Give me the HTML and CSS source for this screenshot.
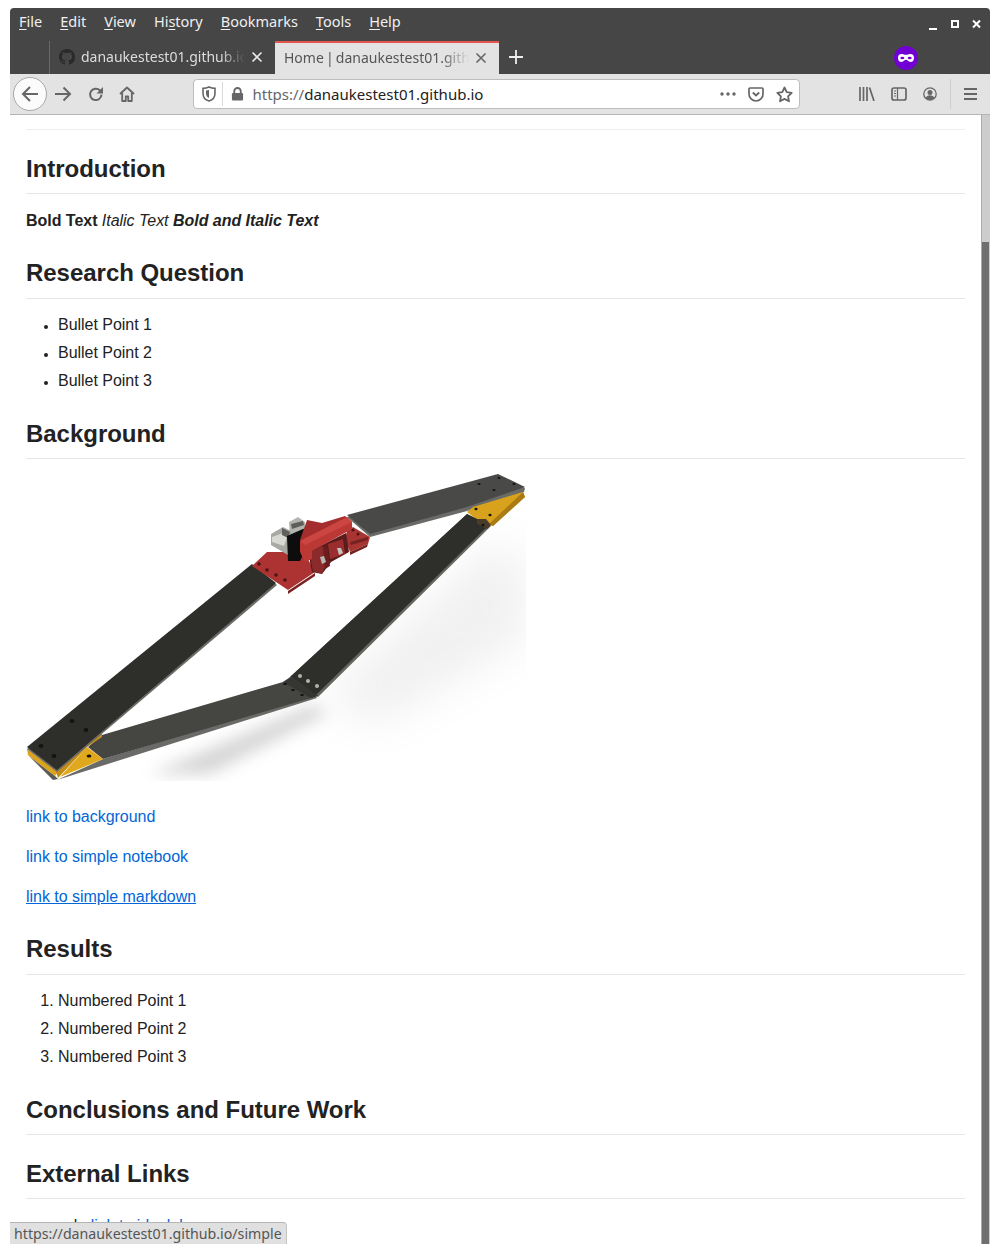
FILE: index.html
```html
<!DOCTYPE html>
<html lang="en">
<head>
<meta charset="utf-8">
<title>Home | danaukestest01.github.io</title>
<link rel="stylesheet" href="styles.css">
</head>
<body>
<div class="window">
  <header class="titlebar">
    <nav class="menubar">
      <span class="menu"><u>F</u>ile</span>
      <span class="menu"><u>E</u>dit</span>
      <span class="menu"><u>V</u>iew</span>
      <span class="menu">Hi<u>s</u>tory</span>
      <span class="menu"><u>B</u>ookmarks</span>
      <span class="menu"><u>T</u>ools</span>
      <span class="menu"><u>H</u>elp</span>
      <span class="winctl">
        <svg width="64" height="12" viewBox="0 0 64 12"><path d="M1 10h8" stroke="#fff" stroke-width="2"/><rect x="24" y="2" width="6" height="6" fill="none" stroke="#fff" stroke-width="2"/><path d="M45 1.500l7 7M52 1.500l-7 7" stroke="#fff" stroke-width="2"/></svg>
      </span>
    </nav>
    <div class="tabstrip">
      <div class="tab">
        <svg class="favicon" width="16" height="16" viewBox="0 0 16 16"><path fill="#2a2a2a" d="M8 0C3.58 0 0 3.58 0 8c0 3.54 2.29 6.53 5.47 7.59.4.07.55-.17.55-.38 0-.19-.01-.82-.01-1.49-2.01.37-2.53-.49-2.69-.94-.09-.23-.48-.94-.82-1.13-.28-.15-.68-.52-.01-.53.63-.01 1.08.58 1.23.82.72 1.21 1.87.87 2.33.66.07-.52.28-.87.51-1.07-1.78-.2-3.64-.89-3.64-3.95 0-.87.31-1.59.82-2.15-.08-.2-.36-1.02.08-2.12 0 0 .67-.21 2.2.82.64-.18 1.32-.27 2-.27s1.36.09 2 .27c1.53-1.04 2.2-.82 2.2-.82.44 1.1.16 1.92.08 2.12.51.56.82 1.27.82 2.15 0 3.07-1.87 3.75-3.65 3.95.29.25.54.73.54 1.48 0 1.07-.01 1.93-.01 2.2 0 .21.15.46.55.38A8.01 8.01 0 0 0 16 8c0-4.42-3.58-8-8-8z"/></svg>
        <span class="tabtitle">danaukestest01.github.io</span>
        <svg class="tabclose" width="12" height="12" viewBox="0 0 12 12"><path d="M1.500 1.500l9 9M10.500 1.500l-9 9" stroke="#e8e8e8" stroke-width="1.600"/></svg>
      </div>
      <div class="tab selected">
        <span class="tabtitle">Home | danaukestest01.github.io</span>
        <svg class="tabclose" width="12" height="12" viewBox="0 0 12 12"><path d="M1.500 1.500l9 9M10.500 1.500l-9 9" stroke="#666" stroke-width="1.600"/></svg>
      </div>
      <svg class="newtab" width="16" height="16" viewBox="0 0 16 16"><path d="M8 1v14M1 8h14" stroke="#eee" stroke-width="1.800"/></svg>
      <span class="private">
        <svg width="24" height="24" viewBox="0 0 24 24"><circle cx="12" cy="12" r="12" fill="#7100d4"/><path fill="#fff" d="M7.500 8C5.200 8 4 9.600 4 12s1.400 4 3.500 4c2.200 0 3-2.200 4.500-2.200s2.300 2.200 4.500 2.200c2.100 0 3.500-1.600 3.500-4S18.800 8 16.500 8c-1.500 0-3 .8-4.500.8S9 8 7.500 8z"/><ellipse cx="8.300" cy="12" rx="2" ry="1.200" fill="#7100d4"/><ellipse cx="15.700" cy="12" rx="2" ry="1.200" fill="#7100d4"/></svg>
      </span>
    </div>
  </header>

  <div class="toolbar">
    <span class="backbtn">
      <svg width="18" height="18" viewBox="0 0 18 18"><path d="M17 9H2M9 2L2 9l7 7" fill="none" stroke="#666" stroke-width="2"/></svg>
    </span>
    <svg class="tool" width="18" height="18" viewBox="0 0 18 18"><path d="M1 9h15M9.500 2.500L16 9l-6.500 6.500" fill="none" stroke="#666" stroke-width="2"/></svg>
    <svg class="tool" width="16" height="16" viewBox="0 0 16 16"><path d="M13.500 8.500a5.700 5.700 0 1 1-1.700-4.200L14 6.500" fill="none" stroke="#666" stroke-width="2"/><path d="M15 1v6.500H8.500z" fill="#666"/></svg>
    <svg class="tool" width="16" height="16" viewBox="0 0 16 16"><path d="M1 8l7-6.500L15 8M3.200 7v8h3.600v-4.500h2.400V15h3.600V7" fill="none" stroke="#666" stroke-width="1.800" stroke-linejoin="round"/></svg>
    <div class="urlbar">
      <svg class="shield" width="14" height="16" viewBox="0 0 14 16"><path d="M7 1c2 1 4 1.400 6 1.400v4.800C13 11 10.500 14 7 15 3.500 14 1 11 1 7.200V2.400C3 2.400 5 2 7 1z" fill="none" stroke="#666" stroke-width="1.600"/><path d="M7 4v8c-2-.8-3-2.600-3-4.800V4.500z" fill="#666"/></svg>
      <span class="urlsep"></span>
      <svg class="lock" width="13" height="16" viewBox="0 0 14 16"><path d="M3.500 7V5a3.500 3.500 0 0 1 7 0v2" fill="none" stroke="#666" stroke-width="2"/><rect x="1" y="7" width="12" height="8" rx="1.200" fill="#666"/></svg>
      <span class="url"><span class="urldim">https://</span>danaukestest01.github.io</span>
      <svg class="dots" width="16" height="4" viewBox="0 0 16 4"><circle cx="2" cy="2" r="1.700" fill="#666"/><circle cx="8" cy="2" r="1.700" fill="#666"/><circle cx="14" cy="2" r="1.700" fill="#666"/></svg>
      <svg class="pocket" width="16" height="15" viewBox="0 0 16 15"><path d="M2 1h12a1 1 0 0 1 1 1v5a7 7 0 0 1-14 0V2a1 1 0 0 1 1-1z" fill="none" stroke="#666" stroke-width="1.700"/><path d="M4.800 5.500L8 8.500l3.200-3" fill="none" stroke="#666" stroke-width="1.800"/></svg>
      <svg class="star" width="17" height="17" viewBox="0 0 17 17"><path d="M8.500 1.500l2.200 4.600 5 .7-3.600 3.500.9 5-4.500-2.400L4 15.300l.9-5L1.300 6.800l5-.7z" fill="none" stroke="#666" stroke-width="1.800" stroke-linejoin="round"/></svg>
    </div>
    <div class="toolright">
      <svg width="16" height="14" viewBox="0 0 16 14"><path d="M1 0v14M4.500 0v14M8 0v14M10.500.5L15 14" fill="none" stroke="#666" stroke-width="1.700"/></svg>
      <svg width="16" height="14" viewBox="0 0 16 14"><rect x="1" y="1" width="14" height="12" rx="2" fill="none" stroke="#666" stroke-width="1.700"/><path d="M6.500 1v12M3 4h2M3 6.500h2M3 9h2" stroke="#666" stroke-width="1.200"/></svg>
      <svg width="14" height="14" viewBox="0 0 14 14"><circle cx="7" cy="7" r="6.200" fill="none" stroke="#666" stroke-width="1.300"/><circle cx="7" cy="5.500" r="2.500" fill="#666"/><path d="M2.500 11c1-2 2.500-2.800 4.500-2.800s3.500.8 4.500 2.800A6 6 0 0 1 7 13a6 6 0 0 1-4.500-2z" fill="#666"/></svg>
      <span class="toolsep"></span>
      <svg width="13" height="12" viewBox="0 0 13 12"><path d="M0 1h13M0 6h13M0 11h13" stroke="#666" stroke-width="1.800"/></svg>
    </div>
  </div>

  <div class="viewport">
    <main class="page">
      <hr class="rule">
      <h2>Introduction</h2>
      <p><strong>Bold Text</strong> <em>Italic Text</em> <strong><em>Bold and Italic Text</em></strong></p>
      <h2>Research Question</h2>
      <ul>
        <li>Bullet Point 1</li>
        <li>Bullet Point 2</li>
        <li>Bullet Point 3</li>
      </ul>
      <h2>Background</h2>
      <svg class="figure" width="500" height="307" viewBox="26 475 500 307" role="img" aria-label="Rendered model of a four-bar mechanism">
        <defs>
          <filter id="soft" x="-30%" y="-30%" width="160%" height="160%"><feGaussianBlur stdDeviation="8"/></filter>
          <filter id="softer" x="-40%" y="-40%" width="180%" height="180%"><feGaussianBlur stdDeviation="20"/></filter>
          <filter id="edge" x="-2%" y="-2%" width="104%" height="104%"><feGaussianBlur stdDeviation="0.45"/></filter>
          <clipPath id="frame"><rect x="26" y="475" width="500" height="307"/></clipPath>
        </defs>
        <g clip-path="url(#frame)">
          <g fill="#8c8c8c">
            <path filter="url(#softer)" opacity=".12" d="M322 700L492 545l34 15v80L380 725z"/>
            <path filter="url(#soft)" opacity=".36" d="M150 775L312 706l16 8L210 775z"/>
          </g>
          <g filter="url(#edge)">
            <path fill="#6a6a67" d="M347 518L498 476l27 13-1 4-57 19-97 26z"/>
            <path fill="#4a4a47" d="M347 516L498 475l27 13-58 20-97 27z"/>
            <path fill="#d9a21b" d="M467 513l6-5 50-15 2 5-32 29-12-3z"/>
            <path fill="#a97a12" d="M523 493l2 5-32 29-4-2z"/>
            <path fill="#66665f" d="M290 678L467 515l24 12-173 171z"/>
            <path fill="#2d2d2c" d="M290 678L467 515l22 11-173 170z"/>
            <path fill="#4a3c2c" d="M477 520l9 0 5 6-4 4-10-5z"/>

            <path fill="#6b6b67" d="M57 781L103 760 315 696l2 3z"/>
            <path fill="#444442" d="M102 736L283 683l8-5 27 19-215 63-15-12z"/>
            <path fill="#2b2c2a" d="M290 678l-7 5 28 16 7-2z" opacity=".6"/>

            <path fill="#5a5a57" d="M28 756l25 25 5-1-3-3z"/>
            <path fill="#dca31a" d="M27 750l31 23-3 4-27-21z"/>
            <path fill="#c48d14" d="M56 773L102 733v5L87 748 58 779z"/>
            <path fill="#e0a81d" d="M87 748l16 12-43 18z"/>

            <path fill="#6b6b66" d="M27 750L252 567l25 19L57 773z"/>
            <path fill="#2d2d2c" d="M27 748L252 565l24 19L57 771z"/>

            <path fill="#7a2322" d="M288 592l27-18 0 3-27 18z"/>
            <path fill="#ad3331" d="M267 553L252 567l36 24 27-18-11-20z"/>

            <path fill="#a83432" d="M347 532l6-4 17 10-2 7-18 8-5-13z"/>
            <path fill="#742222" d="M350 543l18-5v3l-17 5zM350 553l18-8-1 3-17 8z"/>

            <path fill="#5a1a1a" d="M310 552l36-18 3 19-18 10-9 12-10-2-2-10z"/>

            <path fill="#b4b4af" d="M289 523l9-5 7 5 1 11-16 6z"/>
            <path fill="#5d5e5a" d="M291 525l12-3 1 4-12 4z"/>
            <path fill="#a9a9a4" d="M271 535l12-7 8 4-3 24-17-10z"/>
            <path fill="#d9d9d4" d="M272 538l11-4 4 4-3 9-12-4z"/>
            <path fill="#5e5f5b" d="M282 529l8 4-2 6-6-3z"/>
            <path fill="#090909" d="M287 537l16-7 14-3-17 35-12 0z"/>

            <path fill="#8a2a2a" d="M312 552l10-5 3 3v18l-3 7-9-3-2-10z"/>
            <path fill="#9a2e2d" d="M328 545l15-5 2 15-15 5z"/>
            <path fill="#6c1f1f" d="M323 549l4-2 3 20-5 3z"/>
            <path fill="#b7b7b2" d="M320 558l4-1 2 6-4 2z"/>
            <path fill="#c5c5c0" d="M337 549l4 0 2 5-4 2z"/>

            <path fill="#a42f2e" d="M307 521l15 3 23-7 7 6-47 21-5-3z"/>
            <path fill="#bb3836" d="M300 542L347 518l5 5v7L312 552v8l-7 3-5-10z"/>
            <path fill="#cb4543" d="M300 542L347 518l5 5-47 23z"/>
          </g>
          <g fill="#15130f">
            <ellipse cx="479" cy="485" rx="1.600" ry="1"/><ellipse cx="499" cy="479" rx="1.600" ry="1"/><ellipse cx="494" cy="491" rx="1.600" ry="1"/><ellipse cx="514" cy="485" rx="1.600" ry="1"/>
            <ellipse cx="476" cy="510" rx="1.600" ry="1.200"/><ellipse cx="490" cy="516" rx="1.600" ry="1.200"/><ellipse cx="483" cy="526" rx="1.600" ry="1.200"/>
            <ellipse cx="41" cy="747" rx="2.400" ry="2"/><ellipse cx="54" cy="757" rx="2.400" ry="2"/><ellipse cx="72" cy="722" rx="2.400" ry="2"/><ellipse cx="86" cy="731" rx="2.400" ry="2"/><ellipse cx="89" cy="757" rx="2.400" ry="1.600"/>
            <ellipse cx="285" cy="685" rx="2" ry="1"/><ellipse cx="293" cy="691" rx="2" ry="1"/><ellipse cx="302" cy="696" rx="2" ry="1"/>
          </g>
          <g fill="#b3b3ad">
            <circle cx="300" cy="677" r="2"/><circle cx="308" cy="682" r="2"/><circle cx="317" cy="687" r="2"/>
          </g>
          <g fill="#4b1513">
            <circle cx="259" cy="565" r="1.800"/><circle cx="267" cy="571" r="1.800"/><circle cx="276" cy="576" r="1.800"/><circle cx="285" cy="581" r="1.800"/>
            <circle cx="353" cy="531" r="1.500"/><circle cx="358" cy="535" r="1.500"/>
          </g>
        </g>
      </svg>
      <p><a href="#">link to background</a></p>
      <p><a href="#">link to simple notebook</a></p>
      <p><a href="#" class="hovered">link to simple markdown</a></p>
      <h2>Results</h2>
      <ol>
        <li>Numbered Point 1</li>
        <li>Numbered Point 2</li>
        <li>Numbered Point 3</li>
      </ol>
      <h2>Conclusions and Future Work</h2>
      <h2>External Links</h2>
      <p>example <a href="#">link to idealab</a></p>
    </main>
    <div class="scrollbar"><div class="thumb"></div></div>
  </div>
  <div class="status">https://danaukestest01.github.io/simple</div>
</div>
</body>
</html>
```

FILE: styles.css
```css
* { box-sizing: border-box; }
html, body { height: 100%; }
body {
  margin: 0;
  padding: 8px 10px 10px;
  background: #fff;
}
.window {
  position: relative;
  display: flex;
  flex-direction: column;
  height: 1236px;
  overflow: hidden;
  border-radius: 4px 4px 0 0;
  font-family: "Noto Sans", sans-serif;
}
.titlebar { background: #464646; height: 66px; flex: none; }
.menubar {
  display: flex;
  align-items: center;
  height: 33px;
  padding: 0 9px 7px;
  gap: 18px;
  color: #f0f0f0;
  font-size: 14.500px;
}
.menu u { text-underline-offset: 2px; }
.winctl { margin-left: auto; display: flex; margin-top: 8px; margin-right: -11px; }
.tabstrip { display: flex; align-items: stretch; height: 33px; padding-left: 39px; }
.tab {
  width: 226px;
  display: flex;
  align-items: center;
  padding: 0 12px 2px 9px;
  color: #ddd;
  font-size: 14px;
  border-left: 1px solid #6a6a6a;
}
.tab.selected {
  width: 224px;
  padding-bottom: 2px;
  background: #e3e3e3;
  color: #555;
  border-left: 0;
  border-top: 2px solid #e5554f;
  word-spacing: -1.500px;
}
.favicon { flex: none; margin-right: 6px; }
.tabtitle {
  flex: 1;
  overflow: hidden;
  white-space: nowrap;
  -webkit-mask-image: linear-gradient(to right, #000 85%, transparent 100%);
  mask-image: linear-gradient(to right, #000 85%, transparent 100%);
}
.tabclose { flex: none; margin-left: 6px; }
.newtab { align-self: center; margin-left: 9px; margin-top: -2px; }
.private { align-self: center; margin-left: 370px; display: flex; }
.toolbar {
  flex: none;
  height: 41px;
  display: flex;
  align-items: center;
  background: #e3e3e3;
  border-bottom: 1px solid #b5b5b5;
  padding: 0 13px 0 3px;
}
.backbtn {
  width: 34px;
  height: 34px;
  border: 1px solid #a8a8a8;
  border-radius: 50%;
  background: #fbfbfb;
  display: flex;
  align-items: center;
  justify-content: center;
  flex: none;
  margin-right: 7px;
}
.tool { flex: none; margin-right: 15.500px; }
.urlbar {
  flex: none;
  width: 607px;
  height: 30px;
  margin-left: 42px;
  display: flex;
  align-items: center;
  background: #fff;
  border: 1px solid #bdbdbd;
  border-radius: 4px;
  padding: 0 6px 0 8px;
  font-size: 15px;
}
.urlsep { width: 1px; height: 24px; background: #d8d8d8; margin: 0 8px 0 6px; }
.url { flex: 1; margin-left: 9px; color: #222; white-space: nowrap; }
.urldim { color: #666; }
.dots { margin-right: 12px; }
.pocket { margin-right: 12px; }
.toolright { flex: 1; display: flex; align-items: center; justify-content: flex-end; gap: 16px; }
.toolsep { width: 1px; height: 30px; background: #cfcfcf; margin: 0 -3px; }
.viewport { flex: 1; display: flex; min-height: 0; background: #fff; overflow: hidden; }
.page {
  flex: 1;
  min-width: 0;
  padding: 14px 16px 0;
  color: #222;
  font-family: "Liberation Sans", Arial, sans-serif;
  font-size: 16px;
  line-height: 24px;
  letter-spacing: -0.03px;
}
.rule { height: 1px; border: 0; margin: 0; background: #eee; }
h2 {
  margin: 25px 0 15px;
  padding-bottom: 10.400px;
  border-bottom: 1px solid #e6e6e6;
  font-size: 24px;
  line-height: 29px;
  font-weight: 700;
  color: #222;
}
.rule + h2, h2 + h2 { margin-top: 24px; }
p { margin: 0 0 16px; }
ul, ol { margin: -1px 0 26px; padding-left: 32px; }
li + li { margin-top: 4px; }
ul li::marker { font-size: 12px; }
a { color: #0366d6; text-decoration: none; }
a.hovered { text-decoration: underline; }
.figure { display: block; margin-bottom: 24px; }
.scrollbar {
  flex: none;
  width: 9px;
  background: #cdcdcd;
  border-left: 1px solid #aaa;
  padding-top: 127px;
  padding-right: 1px;
}
.thumb { height: 100%; background: #6f6f6f; }
.status {
  position: absolute;
  left: 0;
  bottom: 0;
  width: 277px;
  height: 22px;
  padding: 0 4px;
  background: #e0e0e0;
  border-top: 1px solid #b5b5b5;
  border-right: 1px solid #c4c4c4;
  border-top-right-radius: 4px;
  color: #555;
  font-size: 14.200px;
  line-height: 21px;
  white-space: nowrap;
}
```
